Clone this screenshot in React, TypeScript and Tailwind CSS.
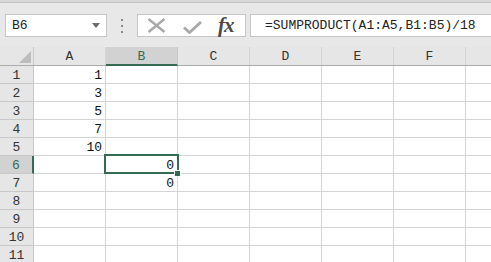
import React from "react";

const COLS = ["A", "B", "C", "D", "E", "F", "G"];
const ROWS = [1, 2, 3, 4, 5, 6, 7, 8, 9, 10, 11];
const valuesA: Record<number, string> = { 1: "1", 2: "3", 3: "5", 4: "7", 5: "10" };
const valuesB: Record<number, string> = { 6: "0", 7: "0" };

function Toolbar() {
  return (
    <div className="h-[47px] bg-[#e8e8e8]">
      <div className="h-[3px] bg-[#d8d8d8] border-b border-[#c4c4c4]" />
      <div className="flex items-start pt-[11px]">
        {/* name box */}
        <div className="ml-[5px] w-[102px] h-[23px] bg-white border border-[#c6c6c6] flex items-center justify-between pl-[6px] pr-[6px]">
          <span className="text-[13px] text-[#222] leading-none">B6</span>
          <svg width="8" height="5" viewBox="0 0 8 5">
            <path d="M0 0 L8 0 L4 5 Z" fill="#6b6b6b" />
          </svg>
        </div>
        {/* separator dots */}
        <div className="w-[30px] h-[23px] flex items-center pl-[14px]">
          <svg width="3" height="14" viewBox="0 0 3 14">
            <rect x="0" y="0" width="2" height="2" fill="#8a8a8a" />
            <rect x="0" y="6" width="2" height="2" fill="#8a8a8a" />
            <rect x="0" y="12" width="2" height="2" fill="#8a8a8a" />
          </svg>
        </div>
        {/* cancel / enter / fx */}
        <div className="w-[109px] h-[23px] bg-white border border-[#c6c6c6] flex items-center">
          <svg className="ml-[9px]" width="19" height="15" viewBox="0 0 19 15">
            <path d="M1.5 1 L17.5 14 M17.5 1 L1.5 14" stroke="#a8a8a8" strokeWidth="2.4" fill="none" />
          </svg>
          <svg className="ml-[17px] mt-[4px]" width="19" height="13" viewBox="0 0 19 13">
            <path d="M1 6.5 L6.5 11.5 L18 1" stroke="#a8a8a8" strokeWidth="2.8" fill="none" />
          </svg>
          <span className="ml-[16px] text-[21px] italic font-semibold text-[#4a4a4a] leading-none font-['Liberation_Serif',serif] tracking-[-1px]">
            fx
          </span>
        </div>
        {/* formula */}
        <div className="ml-[4px] flex-1 h-[23px] bg-white border border-[#c6c6c6] border-r-0 flex items-center pl-[14px]">
          <span className="text-[13px] text-[#222] leading-none whitespace-nowrap">
            =SUMPRODUCT(A1:A5,B1:B5)/18
          </span>
        </div>
      </div>
    </div>
  );
}

function HeaderRow() {
  return (
    <div className="flex h-[19px] bg-[#e6e6e6] border-b border-[#ababab]">
      <div className="relative w-[34px] shrink-0 border-r border-[#c8c8c8]">
        <svg className="absolute right-[2px] bottom-[2px]" width="12" height="12" viewBox="0 0 12 12">
          <path d="M12 0 L12 12 L0 12 Z" fill="#bdbdbd" />
        </svg>
      </div>
      {COLS.map((c) => {
        const sel = c === "B";
        return (
          <div
            key={c}
            className={
              sel
                ? "w-[72px] shrink-0 bg-[#d2d2d2] border-r border-[#c8c8c8] border-b-2 border-b-[#346c52] -mb-[1px] flex items-end justify-center pb-[1px] text-[13px] leading-none text-[#346c52]"
                : "w-[72px] shrink-0 border-r border-[#d4d4d4] flex items-end justify-center pb-[2px] text-[13px] leading-none text-[#333]"
            }
          >
            {c === "G" ? null : c}
          </div>
        );
      })}
    </div>
  );
}

function DataRow({ r }: { r: number }) {
  const sel = r === 6;
  return (
    <div className="flex h-[18px]">
      <div
        className={
          sel
            ? "w-[34px] shrink-0 bg-[#d2d2d2] border-r-2 border-r-[#346c52] border-b border-[#c8c8c8] flex items-end justify-center pb-[1px] text-[13px] leading-none text-[#346c52]"
            : "w-[34px] shrink-0 bg-[#e6e6e6] border-r border-b border-[#c8c8c8] flex items-end justify-center pb-[1px] text-[13px] leading-none text-[#333]"
        }
      >
        {r}
      </div>
      {COLS.map((c) => {
        const v = c === "A" ? valuesA[r] : c === "B" ? valuesB[r] : undefined;
        const active = sel && c === "B";
        return (
          <div
            key={c}
            className="relative w-[72px] shrink-0 border-r border-b border-[#d4d4d4] flex items-end justify-end pr-[3px] pb-[1px] text-[13px] leading-none text-[#111]"
          >
            {v}
            {active && (
              <>
                <div className="absolute z-10 -left-[2px] -top-[2px] w-[75px] h-[20px] border-2 border-[#346c52]" />
                <div className="absolute z-20 -right-[4px] -bottom-[4px] w-[7px] h-[7px] bg-[#346c52] border border-white" />
              </>
            )}
          </div>
        );
      })}
    </div>
  );
}

export default function App() {
  return (
    <div className="w-[491px] h-[262px] overflow-hidden bg-white font-['Liberation_Mono',monospace]">
      <Toolbar />
      <HeaderRow />
      {ROWS.map((r) => (
        <DataRow key={r} r={r} />
      ))}
    </div>
  );
}
